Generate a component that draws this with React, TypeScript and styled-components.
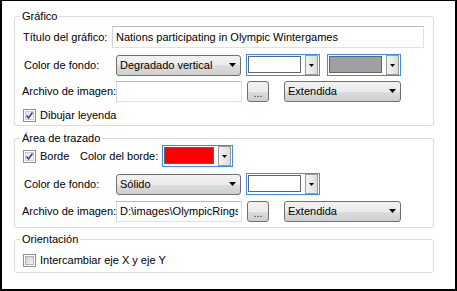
import React from 'react';
import styled, { createGlobalStyle } from 'styled-components';

const Global = createGlobalStyle`
  html, body { margin: 0; padding: 0; background: #fff; }
  body {
    font-family: "Liberation Sans", Arial, sans-serif;
    font-size: 11px;
    color: #000;
  }
`;

const FONT = `"Liberation Sans", Arial, sans-serif`;

const Frame = styled.div`
  box-sizing: border-box;
  width: 457px;
  height: 291px;
  border-style: solid;
  border-color: #000;
  border-width: 1px 2px 2px 2px;
  padding: 8px 21px 0 12px;
  display: flex;
  flex-direction: column;
  background: #fff;
`;

const Group = styled.fieldset<{ $pt: number; $pb: number; $mt?: number }>`
  margin: ${p => p.$mt ?? 0}px 0 0 0;
  padding: ${p => p.$pt}px 8px ${p => p.$pb}px 7px;
  border: 1px solid #d5dfe5;
  border-radius: 3px;
  min-width: 0;
`;

const Legend = styled.legend`
  padding: 0 2px;
  margin-left: -2px;
  font: 11px/14px ${FONT};
  color: #000;
`;

const Rows = styled.div`
  display: flex;
  flex-direction: column;
`;

const Row = styled.div<{ $h: number; $mt?: number }>`
  display: flex;
  align-items: center;
  height: ${p => p.$h}px;
  margin-top: ${p => p.$mt ?? 0}px;
`;

const Label = styled.span<{ $w: number; $pl?: number }>`
  flex: none;
  box-sizing: border-box;
  width: ${p => p.$w}px;
  padding-left: ${p => p.$pl ?? 0}px;
  white-space: nowrap;
  font: 11px/13px ${FONT};
`;

const TextInput = styled.input<{ $w: number; $h: number; $ml?: number }>`
  flex: none;
  box-sizing: border-box;
  width: ${p => p.$w}px;
  height: ${p => p.$h}px;
  margin: 0 0 0 ${p => p.$ml ?? 0}px;
  padding: 0 3px;
  border: 1px solid #dde3ea;
  border-top-color: #b5bac1;
  border-left-color: #d0d5db;
  background: #fff;
  font: 11px ${FONT};
  color: #000;
  outline: none;
`;

const SelectBox = styled.div<{ $w: number; $ml?: number }>`
  flex: none;
  box-sizing: border-box;
  width: ${p => p.$w}px;
  height: 21px;
  margin-left: ${p => p.$ml ?? 0}px;
  padding: 0 4px 0 3px;
  display: flex;
  align-items: center;
  justify-content: space-between;
  border: 1px solid #707070;
  border-radius: 3px;
  background: linear-gradient(#f2f2f2 0%, #ebebeb 50%, #dddddd 50%, #cfcfcf 100%);
  font: 11px ${FONT};
  white-space: nowrap;
`;

const DotsButton = styled.button<{ $ml?: number }>`
  flex: none;
  box-sizing: border-box;
  width: 22px;
  height: 21px;
  margin: 0 0 0 ${p => p.$ml ?? 0}px;
  padding: 0 0 1px 0;
  border: 1px solid #707070;
  border-radius: 3px;
  background: linear-gradient(#f2f2f2 0%, #ebebeb 50%, #dddddd 50%, #cfcfcf 100%);
  font: 11px/13px ${FONT};
  color: #1e2c5a;
  display: flex;
  align-items: flex-end;
  justify-content: center;
`;

const Picker = styled.div<{ $w: number; $ml?: number }>`
  flex: none;
  box-sizing: border-box;
  width: ${p => p.$w}px;
  height: 22px;
  margin-left: ${p => p.$ml ?? 0}px;
  padding: 0 1px;
  display: flex;
  align-items: flex-start;
  border: 1px solid #3d8ee0;
`;

const Swatch = styled.div<{ $c: string }>`
  flex: 1;
  box-sizing: border-box;
  height: 17px;
  margin: 1px 4px 0 0;
  border: 1px solid #646464;
  background: ${p => p.$c};
`;

const DropBtn = styled.div`
  flex: none;
  box-sizing: border-box;
  width: 13px;
  height: 20px;
  display: flex;
  align-items: center;
  justify-content: center;
  border: 1px solid #9a9a9a;
  background: linear-gradient(90deg, #f4f4f4, #dcdcdc);
`;

const CheckField = styled.div<{ $w?: number }>`
  flex: none;
  display: flex;
  align-items: center;
  gap: 4px;
  margin-left: 1px;
  width: ${p => (p.$w ? `${p.$w}px` : 'auto')};
  font: 11px/13px ${FONT};
  white-space: nowrap;
`;

const CheckBox = styled.span<{ $checked?: boolean }>`
  position: relative;
  flex: none;
  box-sizing: border-box;
  width: 13px;
  height: 13px;
  border: 1px solid #8e8f8f;
  background: #fff;
  padding: 1px;
  display: block;
`;

const CheckInner = styled.span<{ $checked?: boolean }>`
  display: block;
  box-sizing: border-box;
  width: 9px;
  height: 9px;
  border: 1px solid ${p => (p.$checked ? '#c9ccd1' : '#aeb3b9')};
  background: ${p =>
    p.$checked
      ? 'linear-gradient(135deg, #e4e5e7, #fbfbfb)'
      : 'linear-gradient(135deg, #cbcfd5, #f3f4f5)'};
`;

const Tick = styled.svg`
  position: absolute;
  left: 1px;
  top: 1px;
`;

const Arrow = ({ w, h }: { w: number; h: number }) => (
  <svg width={w} height={h} viewBox={`0 0 ${w} ${h}`}>
    <polygon points={`0,0 ${w},0 ${w / 2},${h}`} fill="#000" />
  </svg>
);

const Check = ({ checked, children, w }: { checked?: boolean; children: React.ReactNode; w?: number }) => (
  <CheckField $w={w}>
    <CheckBox>
      <CheckInner $checked={checked} />
      {checked && (
        <Tick width="9" height="9" viewBox="0 0 9 9">
          <path d="M1.5 4.5 L3.5 7 L7.5 1.5" fill="none" stroke="#34498a" strokeWidth="1.6" />
        </Tick>
      )}
    </CheckBox>
    <span>{children}</span>
  </CheckField>
);

const Select = ({ w, ml, children }: { w: number; ml?: number; children: React.ReactNode }) => (
  <SelectBox $w={w} $ml={ml}>
    <span>{children}</span>
    <Arrow w={7} h={4} />
  </SelectBox>
);

const ColorPicker = ({ w, ml, color }: { w: number; ml?: number; color: string }) => (
  <Picker $w={w} $ml={ml}>
    <Swatch $c={color} />
    <DropBtn>
      <Arrow w={5} h={3} />
    </DropBtn>
  </Picker>
);

export default function App() {
  return (
    <>
      <Global />
      <Frame>
        <Group $pt={3} $pb={3}>
          <Legend>Gráfico</Legend>
          <Rows>
            <Row $h={22}>
              <Label $w={90} $pl={1}>Título del gráfico:</Label>
              <TextInput $w={312} $h={22} readOnly value="Nations participating in Olympic Wintergames" />
            </Row>
            <Row $h={22} $mt={6}>
              <Label $w={94} $pl={2}>Color de fondo:</Label>
              <Select w={125}>Degradado vertical</Select>
              <ColorPicker w={74} ml={5} color="#ffffff" />
              <ColorPicker w={74} ml={7} color="#a0a0a4" />
            </Row>
            <Row $h={22} $mt={4}>
              <Label $w={94}>Archivo de imagen:</Label>
              <TextInput $w={126} $h={21} readOnly value="" />
              <DotsButton $ml={5}>...</DotsButton>
              <Select w={117} ml={15}>Extendida</Select>
            </Row>
            <Row $h={13} $mt={7}>
              <Check checked>Dibujar leyenda</Check>
            </Row>
          </Rows>
        </Group>

        <Group $pt={0} $pb={5} $mt={5}>
          <Legend>Área de trazado</Legend>
          <Rows>
            <Row $h={22}>
              <Check checked w={57}>Borde</Check>
              <Label $w={82}>Color del borde:</Label>
              <ColorPicker w={71} color="#ff0000" />
            </Row>
            <Row $h={22} $mt={6}>
              <Label $w={94} $pl={2}>Color de fondo:</Label>
              <Select w={125}>Sólido</Select>
              <ColorPicker w={74} ml={5} color="#ffffff" />
            </Row>
            <Row $h={22} $mt={5}>
              <Label $w={94}>Archivo de imagen:</Label>
              <TextInput $w={126} $h={21} readOnly value="D:\images\OlympicRings" />
              <DotsButton $ml={5}>...</DotsButton>
              <Select w={117} ml={15}>Extendida</Select>
            </Row>
          </Rows>
        </Group>

        <Group $pt={8} $pb={5} $mt={4}>
          <Legend>Orientación</Legend>
          <Rows>
            <Row $h={13}>
              <Check>Intercambiar eje X y eje Y</Check>
            </Row>
          </Rows>
        </Group>
      </Frame>
    </>
  );
}
